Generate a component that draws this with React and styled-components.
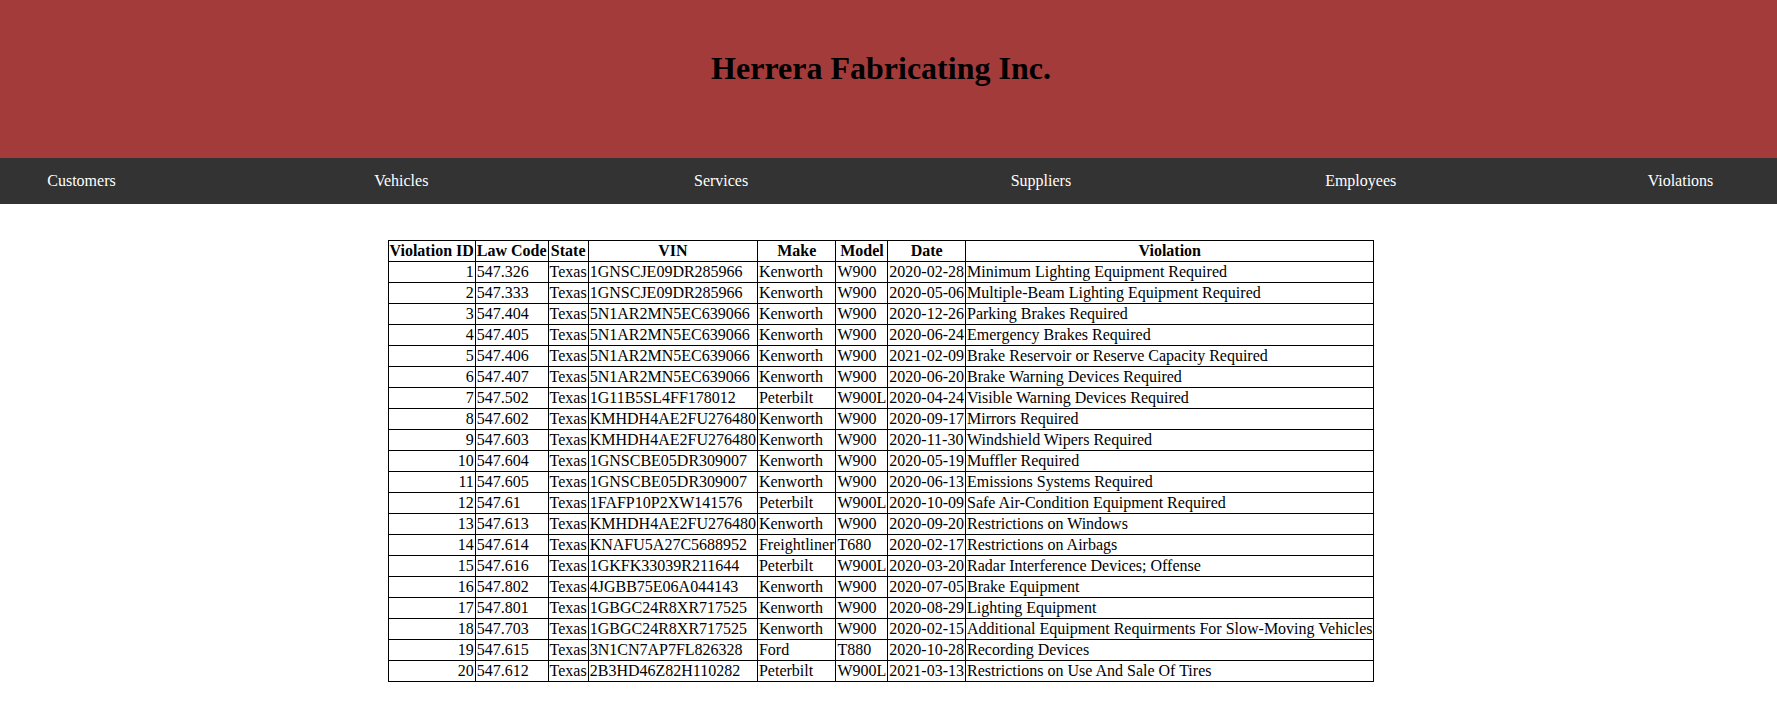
import React from "react";
import styled, { createGlobalStyle } from "styled-components";

const GlobalStyle = createGlobalStyle`
  body {
    margin: 0;
    background: #fff;
    font-family: "Liberation Serif", "Times New Roman", serif;
    font-size: 16px;
    color: #000;
  }
`;

const Page = styled.div`
  width: 100%;
`;

const Header = styled.header`
  height: 158px;
  box-sizing: border-box;
  padding: 50px 15px 0 0;
  background: #a43b3b;
  text-align: center;

  h1 {
    margin: 0;
    font-size: 32px;
    font-weight: bold;
  }
`;

const Nav = styled.nav`
  height: 46px;
  box-sizing: border-box;
  padding-right: 15px;
  background: #333;
  display: flex;
  justify-content: space-between;
  align-items: center;
`;

const NavLink = styled.a`
  width: 163px;
  text-align: center;
  color: #fff;
  text-decoration: none;
  cursor: pointer;
`;

const Main = styled.main`
  padding: 36px 15px 0 0;
`;

const Table = styled.table`
  margin: 0 auto;
  border-collapse: collapse;
  border: 1px solid #000;

  th,
  td {
    border: 1px solid #000;
    padding: 1px;
    white-space: nowrap;
  }

  th {
    font-weight: bold;
    text-align: center;
  }

  td {
    text-align: left;
  }

  td.id {
    text-align: right;
  }
`;

const links = ["Customers", "Vehicles", "Services", "Suppliers", "Employees", "Violations"];

const columns = ["Violation ID", "Law Code", "State", "VIN", "Make", "Model", "Date", "Violation"];

const violations = [
  [1, "547.326", "Texas", "1GNSCJE09DR285966", "Kenworth", "W900", "2020-02-28", "Minimum Lighting Equipment Required"],
  [2, "547.333", "Texas", "1GNSCJE09DR285966", "Kenworth", "W900", "2020-05-06", "Multiple-Beam Lighting Equipment Required"],
  [3, "547.404", "Texas", "5N1AR2MN5EC639066", "Kenworth", "W900", "2020-12-26", "Parking Brakes Required"],
  [4, "547.405", "Texas", "5N1AR2MN5EC639066", "Kenworth", "W900", "2020-06-24", "Emergency Brakes Required"],
  [5, "547.406", "Texas", "5N1AR2MN5EC639066", "Kenworth", "W900", "2021-02-09", "Brake Reservoir or Reserve Capacity Required"],
  [6, "547.407", "Texas", "5N1AR2MN5EC639066", "Kenworth", "W900", "2020-06-20", "Brake Warning Devices Required"],
  [7, "547.502", "Texas", "1G11B5SL4FF178012", "Peterbilt", "W900L", "2020-04-24", "Visible Warning Devices Required"],
  [8, "547.602", "Texas", "KMHDH4AE2FU276480", "Kenworth", "W900", "2020-09-17", "Mirrors Required"],
  [9, "547.603", "Texas", "KMHDH4AE2FU276480", "Kenworth", "W900", "2020-11-30", "Windshield Wipers Required"],
  [10, "547.604", "Texas", "1GNSCBE05DR309007", "Kenworth", "W900", "2020-05-19", "Muffler Required"],
  [11, "547.605", "Texas", "1GNSCBE05DR309007", "Kenworth", "W900", "2020-06-13", "Emissions Systems Required"],
  [12, "547.61", "Texas", "1FAFP10P2XW141576", "Peterbilt", "W900L", "2020-10-09", "Safe Air-Condition Equipment Required"],
  [13, "547.613", "Texas", "KMHDH4AE2FU276480", "Kenworth", "W900", "2020-09-20", "Restrictions on Windows"],
  [14, "547.614", "Texas", "KNAFU5A27C5688952", "Freightliner", "T680", "2020-02-17", "Restrictions on Airbags"],
  [15, "547.616", "Texas", "1GKFK33039R211644", "Peterbilt", "W900L", "2020-03-20", "Radar Interference Devices; Offense"],
  [16, "547.802", "Texas", "4JGBB75E06A044143", "Kenworth", "W900", "2020-07-05", "Brake Equipment"],
  [17, "547.801", "Texas", "1GBGC24R8XR717525", "Kenworth", "W900", "2020-08-29", "Lighting Equipment"],
  [18, "547.703", "Texas", "1GBGC24R8XR717525", "Kenworth", "W900", "2020-02-15", "Additional Equipment Requirments For Slow-Moving Vehicles"],
  [19, "547.615", "Texas", "3N1CN7AP7FL826328", "Ford", "T880", "2020-10-28", "Recording Devices"],
  [20, "547.612", "Texas", "2B3HD46Z82H110282", "Peterbilt", "W900L", "2021-03-13", "Restrictions on Use And Sale Of Tires"],
];

export default function App() {
  return (
    <Page>
      <GlobalStyle />
      <Header>
        <h1>Herrera Fabricating Inc.</h1>
      </Header>
      <Nav>
        {links.map((l) => (
          <NavLink key={l}>{l}</NavLink>
        ))}
      </Nav>
      <Main>
        <Table>
          <thead>
            <tr>
              {columns.map((c) => (
                <th key={c}>{c}</th>
              ))}
            </tr>
          </thead>
          <tbody>
            {violations.map((row) => (
              <tr key={row[0]}>
                {row.map((cell, i) => (
                  <td key={i} className={i === 0 ? "id" : undefined}>
                    {cell}
                  </td>
                ))}
              </tr>
            ))}
          </tbody>
        </Table>
      </Main>
    </Page>
  );
}
